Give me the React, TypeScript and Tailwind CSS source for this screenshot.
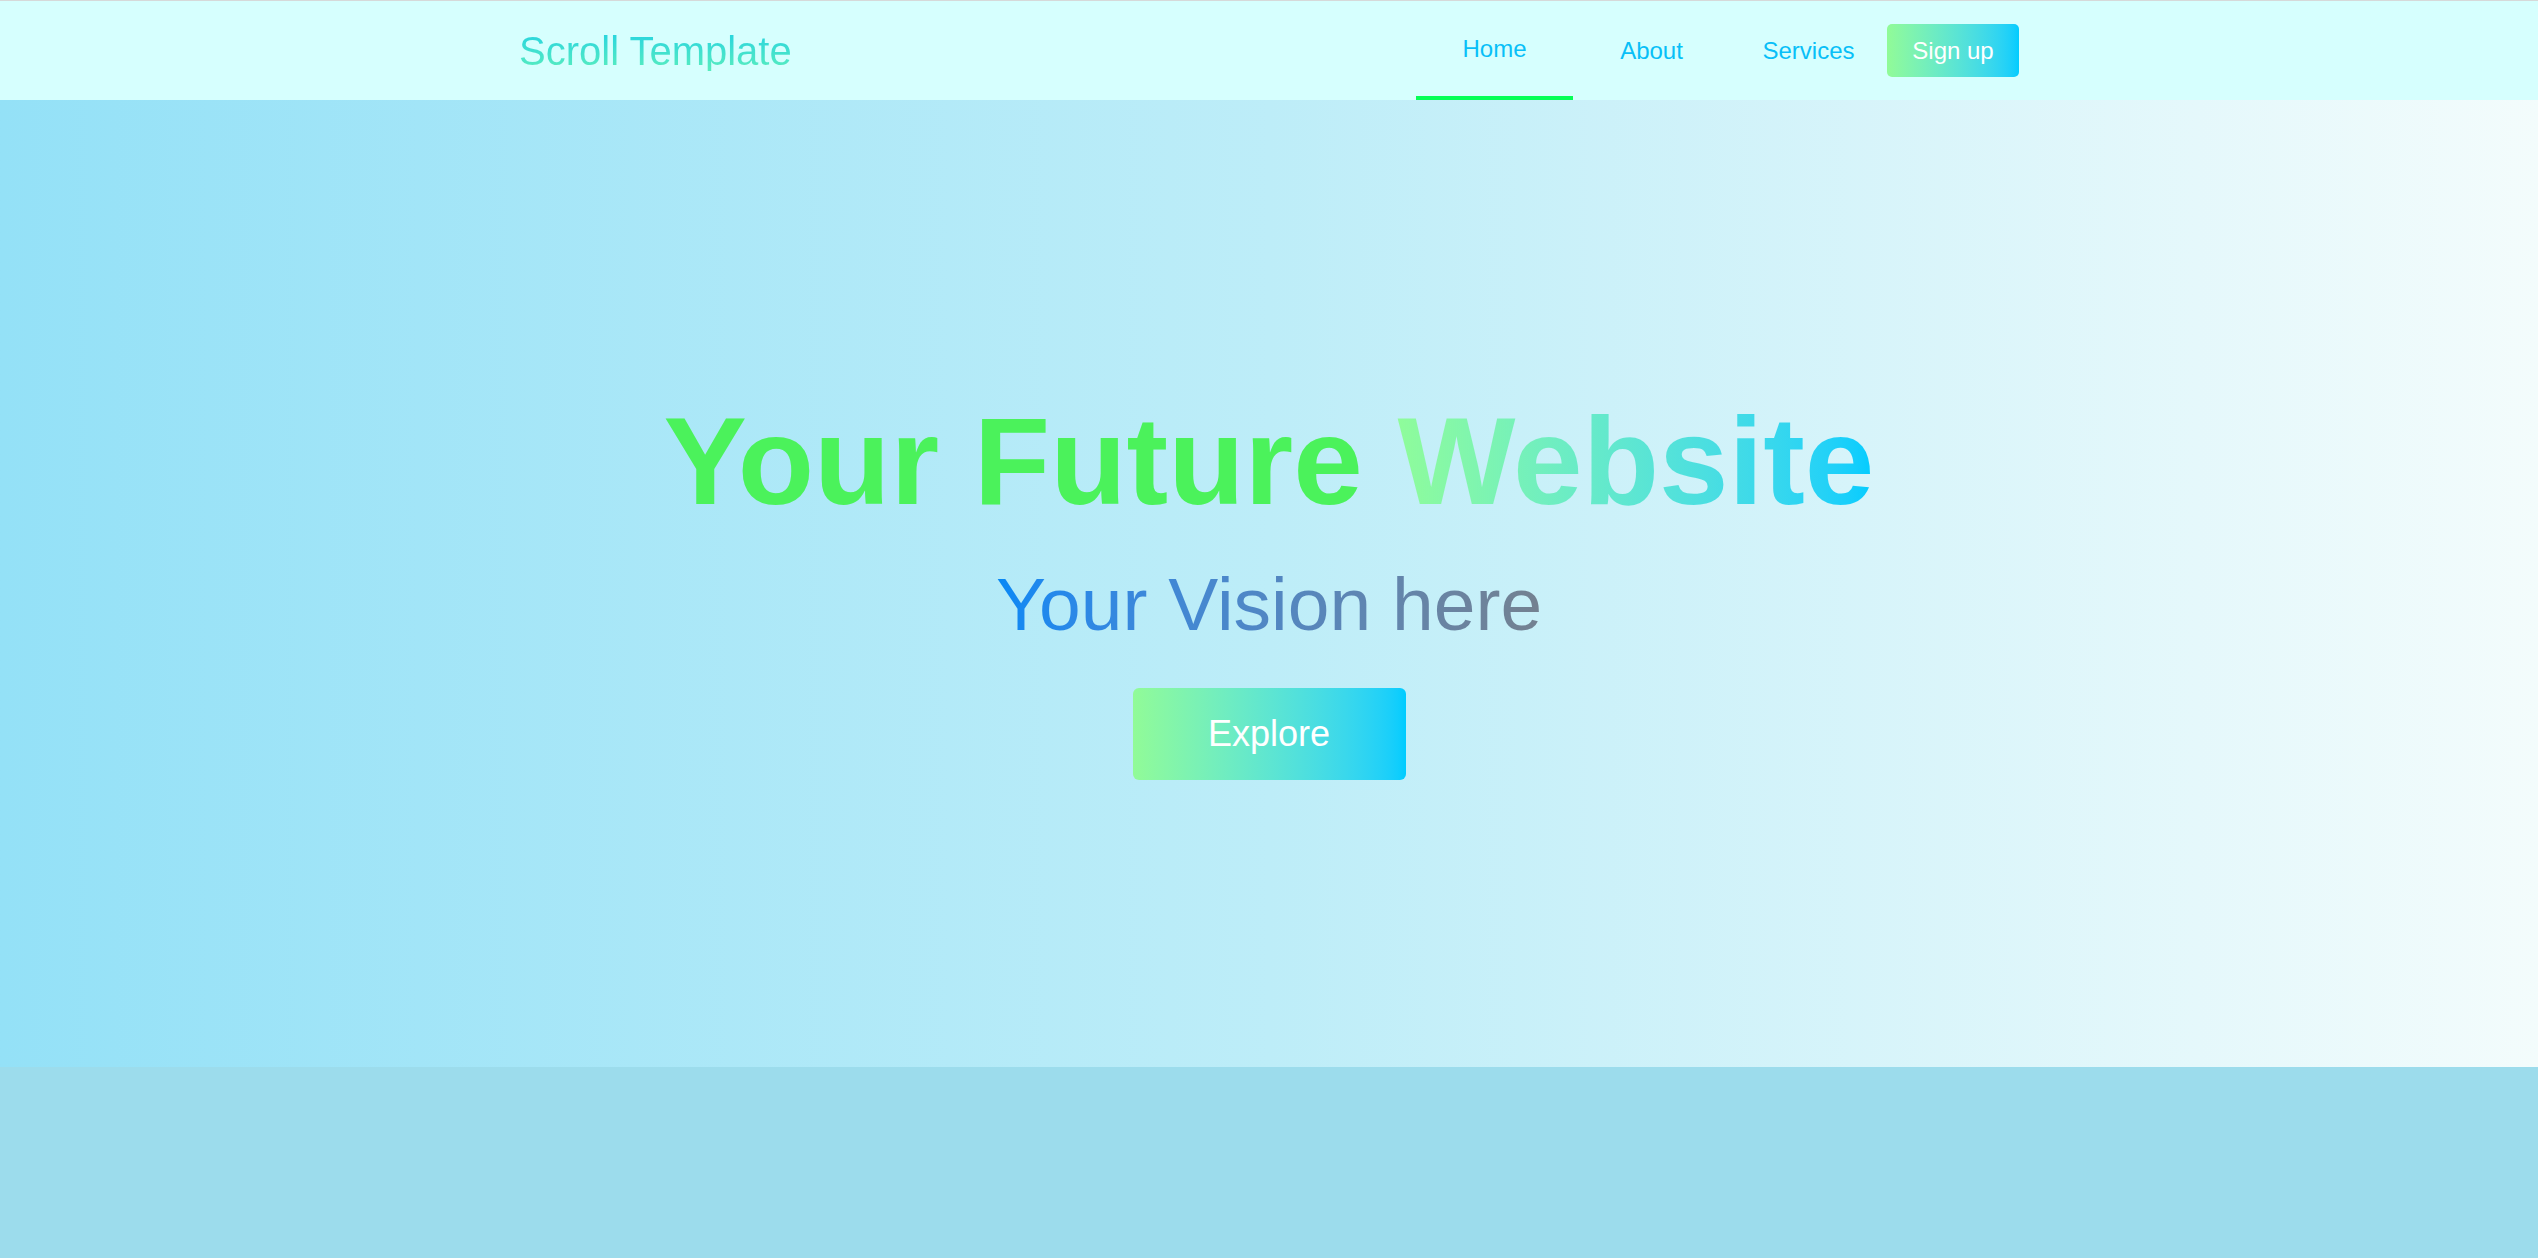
import React from "react";

export default function App() {
  const font = { fontFamily: '"Liberation Sans", Arial, sans-serif' };
  return (
    <div className="w-full min-h-screen bg-[#9cdcec]" style={font}>
      {/* Nav */}
      <nav className="h-[100px] border-t border-[#d6d9d9] bg-[#d6fffe]">
        <div className="mx-auto flex h-full w-[1500px] items-center justify-between">
          <div className="bg-linear-to-b from-[#22d3e0] to-[#58edbd] bg-clip-text text-[40px] leading-none text-transparent">
            Scroll Template
          </div>
          <div className="flex h-full items-center">
            <a className="flex h-full w-[157px] items-center justify-center border-b-4 border-[#05ff55] text-[24px] leading-none text-[#08bff8]">
              Home
            </a>
            <a className="flex h-full w-[157px] items-center justify-center text-[24px] leading-none text-[#08bff8]">
              About
            </a>
            <a className="flex h-full w-[157px] items-center justify-center text-[24px] leading-none text-[#08bff8]">
              Services
            </a>
            <button className="flex h-[53px] w-[132px] items-center justify-center rounded-[5px] bg-linear-to-r from-[#91fb97] to-[#00ccff] text-[24px] leading-none text-white">
              Sign up
            </button>
          </div>
        </div>
      </nav>

      {/* Hero */}
      <section className="flex h-[967px] flex-col items-center bg-linear-to-r from-[#94e1f7] via-[#bdedf8] to-[#f3fcfc] pt-[298px]">
        <h1 className="text-[125px] font-bold leading-none text-[#4bf25b]">
          Your Future{" "}
          <span className="bg-linear-to-r from-[#8ffc9a] to-[#00ccff] bg-clip-text text-transparent">
            Website
          </span>
        </h1>
        <p className="mt-[44px] bg-linear-to-r from-[#0588f5] to-[#748190] bg-clip-text text-[75px] leading-none text-transparent">
          Your Vision here
        </p>
        <button className="mt-[46px] flex h-[92px] w-[273px] items-center justify-center rounded-[6px] bg-linear-to-r from-[#91fb97] to-[#00ccff] text-[36px] leading-none text-white">
          Explore
        </button>
      </section>

      {/* Next section */}
      <section className="h-[400px] bg-[#9cdcec]"></section>
    </div>
  );
}
